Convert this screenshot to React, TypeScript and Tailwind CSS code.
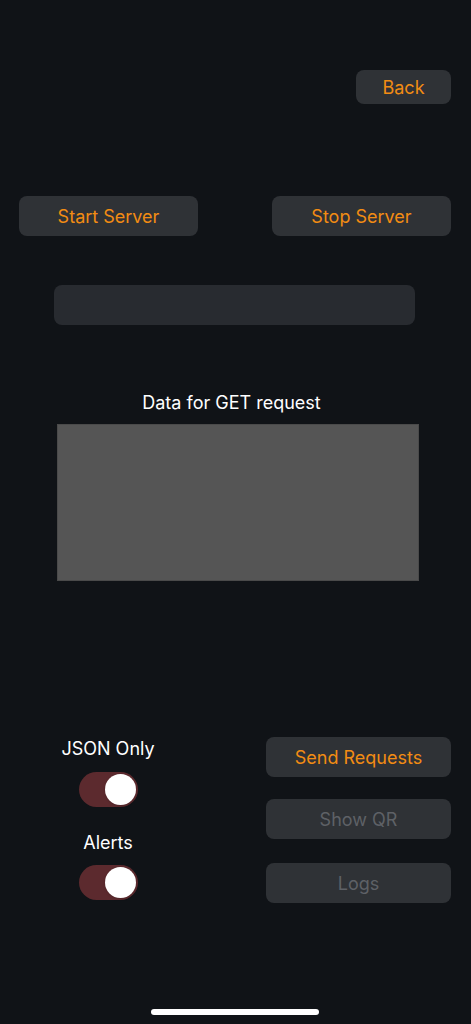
import { useState } from "react";

function Toggle({ on, onChange }: { on: boolean; onChange: () => void }) {
  return (
    <button
      onClick={onChange}
      className={
        "relative w-[59px] h-[35px] rounded-full transition-colors " +
        (on ? "bg-[#5c2a2e]" : "bg-[#3a3d41]")
      }
    >
      <span
        className={
          "absolute top-[2px] w-[31px] h-[31px] rounded-full bg-white shadow transition-all " +
          (on ? "left-[26px]" : "left-[2px]")
        }
      />
    </button>
  );
}

function Btn({ label, disabled, className }: { label: string; disabled?: boolean; className: string }) {
  return (
    <button
      disabled={disabled}
      className={
        "h-10 rounded-lg bg-[#2f3236] text-[18px] " +
        (disabled ? "text-[#5e6166]" : "text-[#f28c13]") +
        " " +
        className
      }
    >
      {label}
    </button>
  );
}

export default function App() {
  const [jsonOnly, setJsonOnly] = useState(true);
  const [alerts, setAlerts] = useState(true);
  const [url, setUrl] = useState("");

  return (
    <div
      className="relative w-[471px] h-[1024px] bg-[#101317] flex flex-col overflow-hidden"
      style={{ fontFamily: "Inter, 'Noto Sans', sans-serif" }}
    >
      {/* top */}
      <div className="flex justify-end pt-[70px] pr-5">
        <button className="w-[95px] h-[34px] rounded-lg bg-[#2f3236] text-[#f28c13] text-[18px]">Back</button>
      </div>

      <div className="flex justify-between pl-[19px] pr-5 mt-[92px]">
        <Btn label="Start Server" className="w-[179px]" />
        <Btn label="Stop Server" className="w-[179px]" />
      </div>

      <input
        value={url}
        onChange={e => setUrl(e.target.value)}
        className="ml-[54px] mt-[49px] w-[361px] h-10 rounded-lg bg-[#282b30] text-white px-3 outline-none"
      />

      <div className="mt-[66px] text-center text-white text-[18px] leading-[24px] pr-2">Data for GET request</div>
      <div className="ml-[57px] mt-[9px] w-[362px] h-[157px] bg-[#555555] border border-[#4a4a4a]" />

      {/* bottom */}
      <div className="flex mt-[155px]">
        <div className="w-[216px] flex flex-col items-center pt-[1px]">
          <div className="text-white text-[18px] leading-[24px]">JSON Only</div>
          <div className="mt-[11px]">
            <Toggle on={jsonOnly} onChange={() => setJsonOnly(!jsonOnly)} />
          </div>
          <div className="mt-[18px] text-white text-[18px] leading-[24px]">Alerts</div>
          <div className="mt-[10px]">
            <Toggle on={alerts} onChange={() => setAlerts(!alerts)} />
          </div>
        </div>
        <div className="ml-[50px] w-[185px] flex flex-col mt-[1px]">
          <Btn label="Send Requests" className="w-full" />
          <Btn label="Show QR" disabled className="w-full mt-[22px]" />
          <Btn label="Logs" disabled className="w-full mt-[24px]" />
        </div>
      </div>

      <div className="absolute bottom-[9px] left-[151px] w-[168px] h-[6px] rounded-full bg-white" />
    </div>
  );
}
